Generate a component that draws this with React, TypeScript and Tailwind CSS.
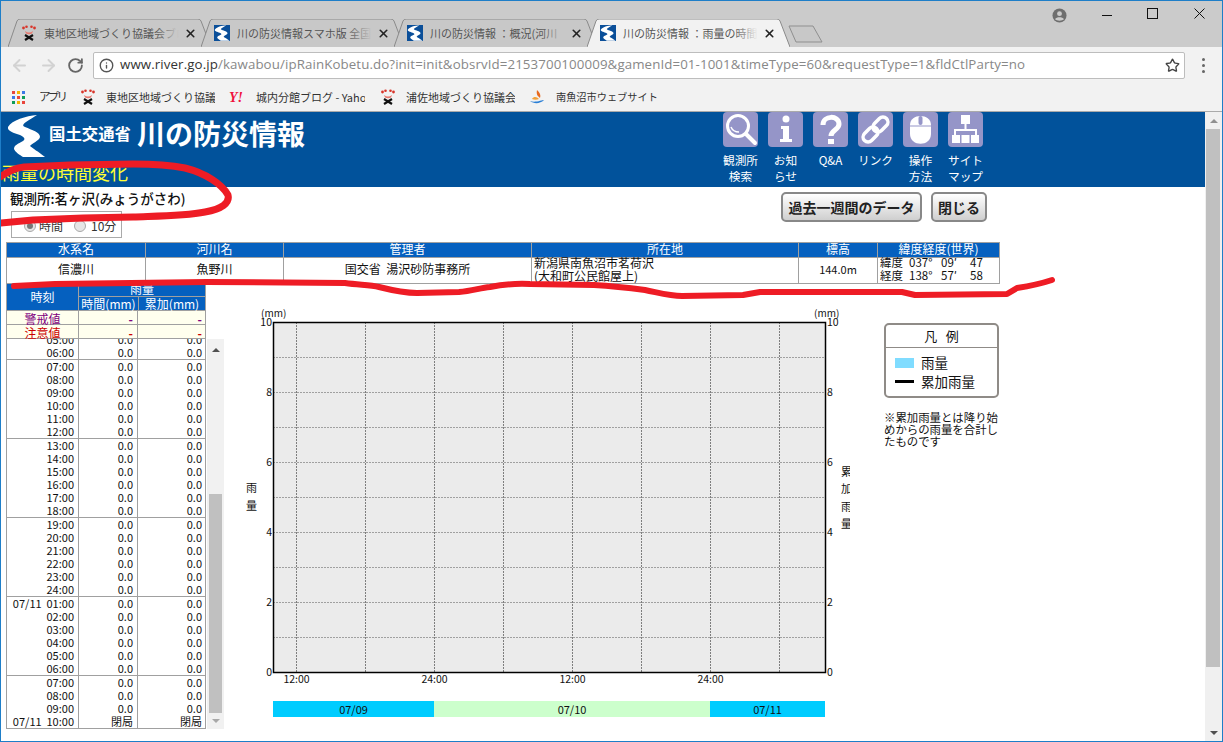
import { ArrowLeft, ArrowRight, Info, RotateCw, Star, X } from 'lucide-react';

const JP = "font-['Noto_Sans_CJK_JP',sans-serif]";

function Paw() {
  return (
    <svg viewBox="0 0 16 16" className="h-4 w-4 shrink-0">
      <circle cx="2.5" cy="3" r="1.4" fill="#d8352a" />
      <circle cx="5.5" cy="1.8" r="1.3" fill="#d8352a" />
      <circle cx="10.5" cy="1.8" r="1.3" fill="#d8352a" />
      <circle cx="13.5" cy="3" r="1.4" fill="#d8352a" />
      <path d="M4 6 Q8 9 12 6 L11 8.5 Q8 10 5 8.5 Z" fill="#e8796f" />
      <path d="M4 10 L12 15 M12 10 L4 15" stroke="#111" strokeWidth="2.2" />
    </svg>
  );
}

const riverPath =
  'M31 1 C20 2 6 6 2 13 C1 17 8 19 14 21 C18 23 20 25 17 27 C12 30 8 31 8 35 C9 38 14 41 17 43 L39 43 C33 38 26 34 24 32 C26 29 33 27 34 23 C34 18 26 16 19 13 C16 12 17 10 20 8 C24 5 28 3 31 1 Z';

function RiverIcon() {
  return (
    <svg viewBox="0 0 40 44" className="h-4 w-4 shrink-0 bg-[#0b4f99]" preserveAspectRatio="none">
      <path d={riverPath} fill="#fff" />
    </svg>
  );
}

const tabs = [
  { icon: 'paw', title: '東地区地域づくり協議会ブログ' },
  { icon: 'river', title: '川の防災情報スマホ版 全国' },
  { icon: 'river', title: '川の防災情報 ：概況(河川' },
  { icon: 'river', title: '川の防災情報 ：雨量の時間', active: true },
];

function Tab({ icon, title, active }: { icon: string; title: string; active?: boolean }) {
  return (
    <div className={`relative -mr-[10px] flex h-7 w-[203px] shrink-0 items-center pl-[13px] ${active ? 'z-10' : ''}`}>
      <svg viewBox="0 0 203 28" className="absolute inset-0 h-7 w-[203px]">
        <path
          d="M0 28 L9 2 Q10 0 12 0 L190 0 Q192 0 193 2 L203 28"
          fill={active ? '#f2f2f2' : '#c8c8c8'}
          stroke="#8a8a8a"
        />
      </svg>
      <div className="relative flex items-center">
        {icon === 'paw' ? <Paw /> : <RiverIcon />}
        <div className="relative ml-[7px] w-[135px] overflow-hidden whitespace-nowrap text-[11px] text-[#555]">
          {title}
          <div
            className={`absolute inset-y-0 right-0 w-6 bg-gradient-to-r from-transparent ${active ? 'to-[#f2f2f2]' : 'to-[#c8c8c8]'}`}
          />
        </div>
        <X className="ml-[5px] h-[13px] w-[13px] text-[#222]" strokeWidth={3} />
      </div>
    </div>
  );
}

function AppsGrid() {
  const colors = ['#e8453c', '#f4b400', '#3b78e7', '#3b78e7', '#e8453c', '#0f9d58', '#0f9d58', '#f4b400', '#e8453c'];
  return (
    <div className="grid h-[13px] w-[13px] grid-cols-3 gap-[2px]">
      {colors.map((c, i) => (
        <span key={i} className="block h-[3px] w-[3px]" style={{ background: c }} />
      ))}
    </div>
  );
}

function Swirl() {
  return (
    <svg viewBox="0 0 16 16" className="h-4 w-4">
      <path d="M8 1 C11 4 12 6 11 9 C9 7 7 6 8 1 Z" fill="#e86a1f" />
      <path d="M3 10 C5 7 8 8 10 10 C8 11 5 11 3 10 Z" fill="#f2a13a" />
      <path d="M1 12 C5 15 11 15 15 11 C13 11 6 14 1 12 Z" fill="#2a7fd6" />
    </svg>
  );
}

function BrowserChrome() {
  return (
    <div className={JP}>
      <div className="flex h-[46px] bg-[#cbcbcb]">
        <div className="flex flex-1 items-end pl-[7px]">
          {tabs.map((t) => (
            <Tab key={t.title} {...t} />
          ))}
          <svg viewBox="0 0 36 18" className="mb-[4px] ml-[8px] h-[18px] w-[36px]">
            <path d="M1 1 L25 1 L34 17 L8 17 Z" fill="#c8c8c8" stroke="#8f8f8f" />
          </svg>
        </div>
        <div className="flex items-start pr-[17px] pt-[7px]">
          <svg viewBox="0 0 16 16" className="mr-[35px] h-[15px] w-[15px]">
            <circle cx="8" cy="8" r="7.5" fill="#6e6e6e" />
            <circle cx="8" cy="6" r="2.6" fill="#cbcbcb" />
            <path d="M3.2 12 C5 9.2 11 9.2 12.8 12 C11 14 5 14 3.2 12 Z" fill="#cbcbcb" />
          </svg>
          <div className="mr-[35px] mt-[7px] h-px w-[10px] bg-[#111]" />
          <div className="mr-[36px] h-[11px] w-[11px] border border-[#111]" />
          <svg viewBox="0 0 11 11" className="h-[11px] w-[11px]">
            <path d="M0.5 0.5 L10.5 10.5 M10.5 0.5 L0.5 10.5" stroke="#111" />
          </svg>
        </div>
      </div>
      <div className="flex h-[36px] items-center bg-[#f2f2f2] pl-[9px] pr-[8px]">
        <ArrowLeft className="h-[19px] w-[19px] text-[#d2d2d2]" strokeWidth={2.4} />
        <ArrowRight className="ml-[10px] h-[19px] w-[19px] text-[#d2d2d2]" strokeWidth={2.4} />
        <RotateCw className="ml-[9px] h-[17px] w-[17px] text-[#666]" strokeWidth={2.6} />
        <div className="ml-[9px] flex h-[27px] w-[1092px] items-center rounded-[2px] border border-[#bdbdbd] bg-white pl-[5px] pr-[4px]">
          <Info className="h-[15px] w-[15px] text-[#555]" strokeWidth={2.2} />
          <span className="ml-[6px] font-['Open_Sans',sans-serif] text-[13.3px] tracking-[0.1px] text-[#888]">
            <span className="text-[#333]">www.river.go.jp</span>
            /kawabou/ipRainKobetu.do?init=init&amp;obsrvId=2153700100009&amp;gamenId=01-1001&amp;timeType=60&amp;requestType=1&amp;fldCtlParty=no
          </span>
          <Star className="ml-auto h-[15px] w-[15px] text-[#444]" strokeWidth={2.2} />
        </div>
        <div className="ml-[17px] flex flex-col gap-[3px]">
          <span className="block h-[3px] w-[3px] rounded-full bg-[#666]" />
          <span className="block h-[3px] w-[3px] rounded-full bg-[#666]" />
          <span className="block h-[3px] w-[3px] rounded-full bg-[#666]" />
        </div>
      </div>
      <div className="flex h-[28px] items-center bg-[#f2f2f2] pl-[11px] text-[11px] text-[#333]">
        <AppsGrid />
        <span className="ml-[14px] w-[26px] whitespace-nowrap text-[11.5px] tracking-[-2.8px]">アプリ</span>
        <span className="ml-[15px]"><Paw /></span>
        <span className="ml-[10px] w-[109px] overflow-hidden whitespace-nowrap">東地区地域づくり協議会</span>
        <span className="ml-[14px] w-[16px] font-['Liberation_Serif',serif] text-[14px] font-bold italic text-[#f0123c]">Y!</span>
        <span className="ml-[11px] w-[109px] overflow-hidden whitespace-nowrap">城内分館ブログ - Yahoo!</span>
        <span className="ml-[15px]"><Paw /></span>
        <span className="ml-[10px] w-[109px] overflow-hidden whitespace-nowrap">浦佐地域づくり協議会</span>
        <span className="ml-[14px]"><Swirl /></span>
        <span className="ml-[11px] whitespace-nowrap text-[10.2px]">南魚沼市ウェブサイト</span>
      </div>
    </div>
  );
}

function NavIcon({ label, children }: { label: [string, string?]; children: React.ReactNode }) {
  return (
    <div className="flex w-[35px] flex-col items-center">
      <svg viewBox="0 0 35 35" className="h-[35px] w-[35px]">
        <rect width="35" height="35" rx="4" fill="#9595c8" />
        {children}
      </svg>
      <div className="mt-[5px] whitespace-nowrap text-center text-[11.7px] leading-[16px] text-white">
        {label[0]}
        <br />
        {label[1]}
      </div>
    </div>
  );
}

function Header() {
  return (
    <div className="flex h-[75px] overflow-hidden bg-[#01529b]">
      <div className="w-[722px]">
        <div className="flex h-[49px] pl-[5px] pt-[2px]">
          <svg viewBox="0 0 40 44" className="h-[44px] w-[40px]">
            <path d={riverPath} fill="#fff" />
          </svg>
          <span className="ml-[3px] mt-[9px] text-[16.4px] font-bold leading-[20px] text-white">国土交通省</span>
          <span className="ml-[6px] text-[28px] font-bold leading-[38px] text-white">川の防災情報</span>
        </div>
        <div className="pl-[1px] text-[18px] leading-[22px] text-[#ffff33]">雨量の時間変化</div>
      </div>
      <div className="flex gap-[10px]">
        <NavIcon label={['観測所', '検索']}>
          <circle cx="15" cy="14" r="10.5" fill="none" stroke="#fff" strokeWidth="3" />
          <path d="M8 15 Q10 20 16 20" fill="none" stroke="#fff" strokeWidth="1.5" />
          <path d="M23 22 L32 31" stroke="#fff" strokeWidth="4" strokeLinecap="round" />
        </NavIcon>
        <NavIcon label={['お知', 'らせ']}>
          <circle cx="18" cy="7" r="3.5" fill="#fff" />
          <path d="M13 14 H21 V27 H24 V30 H12 V27 H15 V17 H13 Z" fill="#fff" />
        </NavIcon>
        <NavIcon label={['Q&A']}>
          <path d="M10 13 C10 3 26 3 26 12 C26 18 18 18 18 24" fill="none" stroke="#fff" strokeWidth="5" />
          <rect x="15" y="27" width="6" height="5" fill="#fff" />
        </NavIcon>
        <NavIcon label={['リンク']}>
          <g fill="none" stroke="#fff" strokeWidth="3.5" transform="rotate(-45 17.5 17.5)">
            <rect x="2" y="12.5" width="17" height="10" rx="5" />
            <rect x="16" y="12.5" width="17" height="10" rx="5" />
          </g>
        </NavIcon>
        <NavIcon label={['操作', '方法']}>
          <path d="M7 13 C7 1 28 1 28 13 V22 C28 35 7 35 7 22 Z" fill="#fff" />
          <rect x="15.5" y="4" width="4" height="9" rx="2" fill="#9595c8" />
          <path d="M7 14 H28" stroke="#9595c8" strokeWidth="1" />
        </NavIcon>
        <NavIcon label={['サイト', 'マップ']}>
          <rect x="13" y="3" width="9" height="9" fill="#fff" />
          <path d="M17.5 12 V18 M7 24 V18 H28 V24" fill="none" stroke="#fff" strokeWidth="2" />
          <rect x="4" y="23" width="8" height="8" fill="#fff" />
          <rect x="13.5" y="23" width="8" height="8" fill="#fff" />
          <rect x="23" y="23" width="8" height="8" fill="#fff" />
        </NavIcon>
      </div>
    </div>
  );
}

function GrayButton({ children, className }: { children: React.ReactNode; className: string }) {
  return (
    <div
      className={`flex h-[30px] items-center justify-center rounded-[5px] border-2 border-[#888] bg-gradient-to-b from-white to-[#cfcfcf] text-[14px] font-bold text-[#222] ${className}`}
    >
      {children}
    </div>
  );
}

function Radio({ on }: { on?: boolean }) {
  return (
    <span className="flex h-[12px] w-[12px] shrink-0 items-center justify-center rounded-full border border-[#aaa] bg-[#e6e6e6]">
      {on && <span className="block h-[6px] w-[6px] rounded-full bg-[#777]" />}
    </span>
  );
}

function InfoTable() {
  const head = 'flex items-center justify-center border-l border-[#a0a0a0] pb-[2px] leading-none first:border-l-0';
  const cell = 'flex items-center border-l border-[#a0a0a0] pb-[3px] first:border-l-0';
  const wide = 'flex items-center border-l border-[#a0a0a0] pb-[4px] pl-[2px] leading-[13px]';
  const cols = 'grid grid-cols-[138px_138px_248px_267px_79px_122px]';
  return (
    <div className="ml-[5px] w-[994px] border border-[#a0a0a0] text-[12px] text-[#111]">
      <div className={`${cols} h-[14px] bg-[#0560bf] text-white`}>
        <div className={head}>水系名</div>
        <div className={head}>河川名</div>
        <div className={head}>管理者</div>
        <div className={head}>所在地</div>
        <div className={head}>標高</div>
        <div className={head}>緯度経度(世界)</div>
      </div>
      <div className={`${cols} h-[26px] grid-rows-[25px] border-t border-[#a0a0a0]`}>
        <div className={`${cell} justify-center`}>信濃川</div>
        <div className={`${cell} justify-center`}>魚野川</div>
        <div className={`${cell} justify-center`}>国交省&nbsp; 湯沢砂防事務所</div>
        <div className={wide}>
          <div>
            新潟県南魚沼市茗荷沢
            <br />
            (大和町公民館屋上)
          </div>
        </div>
        <div className={`${cell} justify-center text-[11px]`}>144.0m</div>
        <div className={`${wide} text-[11.5px]`}>
          <div>
            <div className="flex">
              <span className="w-[29px]">緯度</span>
              <span className="w-[32px]">037°</span>
              <span className="w-[29px]">09′</span>
              <span>47</span>
            </div>
            <div className="flex">
              <span className="w-[29px]">経度</span>
              <span className="w-[32px]">138°</span>
              <span className="w-[29px]">57′</span>
              <span>58</span>
            </div>
          </div>
        </div>
      </div>
    </div>
  );
}

const section = (times: string[]) => times.map((t) => ({ t, a: '0.0', b: '0.0' }));
const sections = [
  section(['05:00', '06:00']),
  section(['07:00', '08:00', '09:00', '10:00', '11:00', '12:00']),
  section(['13:00', '14:00', '15:00', '16:00', '17:00', '18:00']),
  section(['19:00', '20:00', '21:00', '22:00', '23:00', '24:00']),
  section(['07/11 01:00', '02:00', '03:00', '04:00', '05:00', '06:00']),
  [...section(['07:00', '08:00', '09:00']), { t: '07/11 10:00', a: '閉局', b: '閉局' }],
];

function Limit({ label, color }: { label: string; color: string }) {
  return (
    <div className={`grid h-[14px] grid-cols-[71px_59px_68px] border-b border-[#a0a0a0] bg-[#ffffee] leading-[15px] ${color}`}>
      <div className="text-center">{label}</div>
      <div className="border-l border-[#a0a0a0] pr-[4px] text-right font-bold">-</div>
      <div className="border-l border-[#a0a0a0] pr-[3px] text-right font-bold">-</div>
    </div>
  );
}

function TimeTable() {
  return (
    <div className="ml-[5px] w-[218px] text-[12px]">
      <div className="w-[200px] border-x border-[#a0a0a0]">
        <div className="flex h-[26px] bg-[#0560bf] text-white">
          <div className="flex w-[71px] items-center justify-center">時刻</div>
          <div className="flex-1 border-l border-[#a0a0a0]">
            <div className="h-[12px] text-center leading-[10px]">雨量</div>
            <div className="flex h-[14px] border-t border-[#a0a0a0] leading-[14px]">
              <div className="w-[59px] text-center">時間(mm)</div>
              <div className="flex-1 border-l border-[#a0a0a0] text-center">累加(mm)</div>
            </div>
          </div>
        </div>
        <div className="border-t border-[#a0a0a0]">
          <Limit label="警戒値" color="text-[#800080]" />
          <Limit label="注意値" color="text-[#cc0000]" />
        </div>
      </div>
      <div className="flex h-[390px]">
        <div className="flex w-[200px] flex-col justify-end overflow-hidden border-x border-b border-[#a0a0a0] text-[#111]">
          {sections.map((rows, i) => (
            <div key={i} className="shrink-0 border-b border-[#a0a0a0] last:border-b-0">
              {rows.map((r, j) => (
                <div key={j} className="grid h-[13px] grid-cols-[71px_59px_68px] text-[11px] leading-[13px]">
                  <div className="whitespace-pre pr-[4px] text-right">{r.t.replace(' ', '  ')}</div>
                  <div className="border-l border-[#a0a0a0] pr-[4px] text-right">{r.a}</div>
                  <div className="border-l border-[#a0a0a0] pr-[3px] text-right">{r.b}</div>
                </div>
              ))}
            </div>
          ))}
        </div>
        <div className="ml-px flex w-[17px] flex-col bg-[#f1f1f1]">
          <div className="flex h-[17px] items-center justify-center pt-[4px]">
            <div className="h-0 w-0 border-x-[4px] border-b-[4px] border-x-transparent border-b-[#505050]" />
          </div>
          <div className="flex-1" />
          <div className="mx-[2px] h-[219px] bg-[#c0c0c0]" />
          <div className="flex h-[16px] items-center justify-center">
            <div className="h-0 w-0 border-x-[4px] border-t-[4px] border-x-transparent border-t-[#a8a8a8]" />
          </div>
        </div>
      </div>
    </div>
  );
}

function Chart() {
  const px = 33.5;
  const py = 18.5;
  const hLines = [1, 2, 3, 4, 5, 6, 7, 8, 9];
  const vLines = [0, 1, 2, 3, 4, 5, 6, 7];
  return (
    <svg viewBox="0 0 610 385" className="block h-[385px] w-[610px] text-[11px]" fill="#111">
      <rect x={px} y={py} width="552" height="350" fill="#ebebeb" />
      {hLines.map((n) => (
        <line key={n} x1={px} x2={px + 552} y1={py + n * 35} y2={py + n * 35} stroke="#555" strokeDasharray="1 2" />
      ))}
      {vLines.map((n) => (
        <line key={n} x1={56.5 + n * 69} x2={56.5 + n * 69} y1={py} y2={py + 350} stroke="#111" strokeDasharray="1 2" />
      ))}
      <rect x={px} y={py} width="552" height="350" fill="none" stroke="#000" strokeWidth="1.5" />
      {[0, 2, 4, 6, 8, 10].map((v) => (
        <g key={v}>
          <text x="32" y={18 + 350 - v * 35 + 4} textAnchor="end" className="text-[10.5px]">{v}</text>
          <text x="587" y={18 + 350 - v * 35 + 4} className="text-[10.5px]">{v}</text>
        </g>
      ))}
      <text x="21" y="13" className="text-[10px]">(mm)</text>
      <text x="574" y="13" className="text-[10px]">(mm)</text>
      {['12:00', '24:00', '12:00', '24:00'].map((t, i) => (
        <text key={i} x={56.5 + i * 138} y="379" textAnchor="middle" className="text-[10.5px]">{t}</text>
      ))}
      <text x="6" y="188" className="text-[11px]">雨</text>
      <text x="6" y="206" className="text-[11px]">量</text>
      {['累', '加', '雨', '量'].map((c, i) => (
        <text key={i} x="601" y={172 + i * 17.3} className="text-[11px]">{c}</text>
      ))}
    </svg>
  );
}

function Legend() {
  return (
    <div className="w-[115px] pt-[39px] text-[#111]">
      <div className="h-[75px] rounded-[5px] border-2 border-[#8f8b87]">
        <div className="h-[23px] border-b border-[#8f8b87] text-center text-[13px] leading-[22px]">凡&nbsp;&nbsp;&nbsp;例</div>
        <div className="flex items-center pl-[9px] pt-[5px] text-[13.5px] leading-[19px]">
          <span className="h-[10px] w-[19px] bg-[#80dcff]" />
          <span className="ml-[7px]">雨量</span>
        </div>
        <div className="flex items-center pl-[9px] text-[13.5px] leading-[19px]">
          <span className="h-[3px] w-[19px] bg-black" />
          <span className="ml-[7px]">累加雨量</span>
        </div>
      </div>
      <div className="mt-[13px] whitespace-nowrap text-[11.4px] leading-[12px]">
        ※累加雨量とは降り始
        <br />
        めからの雨量を合計し
        <br />
        たものです
      </div>
    </div>
  );
}

function Scribbles() {
  return (
    <svg viewBox="0 0 1223 742" className="pointer-events-none absolute left-[-1px] top-[-1px] z-20 h-[742px] w-[1223px]">
      <g fill="none" stroke="#ee1c25" strokeLinecap="round" strokeLinejoin="round">
        <path
          strokeWidth="7"
          d="M0 177 C8 172 14 168 24 167 L70 165 L133 164 C150 164 170 165 185 168 C205 173 222 184 228 195 C230 203 222 209 205 212 C185 216 160 216 133 217 L83 218 L33 220 L0 223"
        />
        <path
          strokeWidth="6"
          d="M14 286 L55 284 L207 282 L345 283 C360 285 370 285 379 287 C395 291 405 293 417 293 L459 292 C472 291 480 288 490 287 C500 285 510 283 530 284 L594 285 C612 286 630 288 645 290 C660 293 670 296 682 296 L743 295 L760 292 L902 292 L915 295 L1007 294 L1017 288 C1030 286 1040 284 1052 280"
        />
      </g>
    </svg>
  );
}

export default function App() {
  return (
    <div className={`relative flex h-[742px] w-[1223px] flex-col overflow-hidden border border-[#1e7ec8] bg-white ${JP}`}>
      <BrowserChrome />
      <div className="flex flex-1 overflow-hidden border-t border-[#aaa]">
        <div className="w-[1204px]">
          <Header />
          <div className="flex h-[55px] w-[986px] justify-between">
            <div className="pl-[9px]">
              <div className="pt-[1px] text-[13.5px] font-medium leading-[20px] text-[#111]">観測所:茗ヶ沢(みょうがさわ)</div>
              <div className="ml-px mt-[3px] flex h-[27px] w-[111px] items-center border border-[#aaa] pl-[12px] pt-[3px] text-[12px] text-[#333]">
                <Radio on />
                <span className="ml-[3px]">時間</span>
                <span className="ml-[11px]"><Radio /></span>
                <span className="ml-[5px]">10分</span>
              </div>
            </div>
            <div className="flex gap-[9px] pt-[5px]">
              <GrayButton className="w-[141px]">過去一週間のデータ</GrayButton>
              <GrayButton className="w-[56px]">閉じる</GrayButton>
            </div>
          </div>
          <InfoTable />
          <div className="flex">
            <TimeTable />
            <div className="ml-[16px] w-[644px] pt-[20px]">
              <Chart />
              <div className="ml-[33px] mt-[12px] flex h-[16px] w-[552px] text-center text-[11px] leading-[16px] text-[#111]">
                <div className="w-[161px] bg-[#00ccff]">07/09</div>
                <div className="w-[276px] bg-[#ccffcc]">07/10</div>
                <div className="w-[115px] bg-[#00ccff]">07/11</div>
              </div>
            </div>
            <Legend />
          </div>
        </div>
        <div className="flex w-[17px] flex-col bg-[#f0f0f0]">
          <div className="flex h-[17px] items-center justify-center">
            <div className="h-0 w-0 border-x-[4px] border-b-[4px] border-x-transparent border-b-[#909090]" />
          </div>
          <div className="mx-[1px] h-[538px] w-[14px] bg-[#c0c0c0]" />
          <div className="flex-1" />
          <div className="flex h-[17px] items-center justify-center">
            <div className="h-0 w-0 border-x-[4px] border-t-[4px] border-x-transparent border-t-[#505050]" />
          </div>
        </div>
      </div>
      <Scribbles />
    </div>
  );
}
